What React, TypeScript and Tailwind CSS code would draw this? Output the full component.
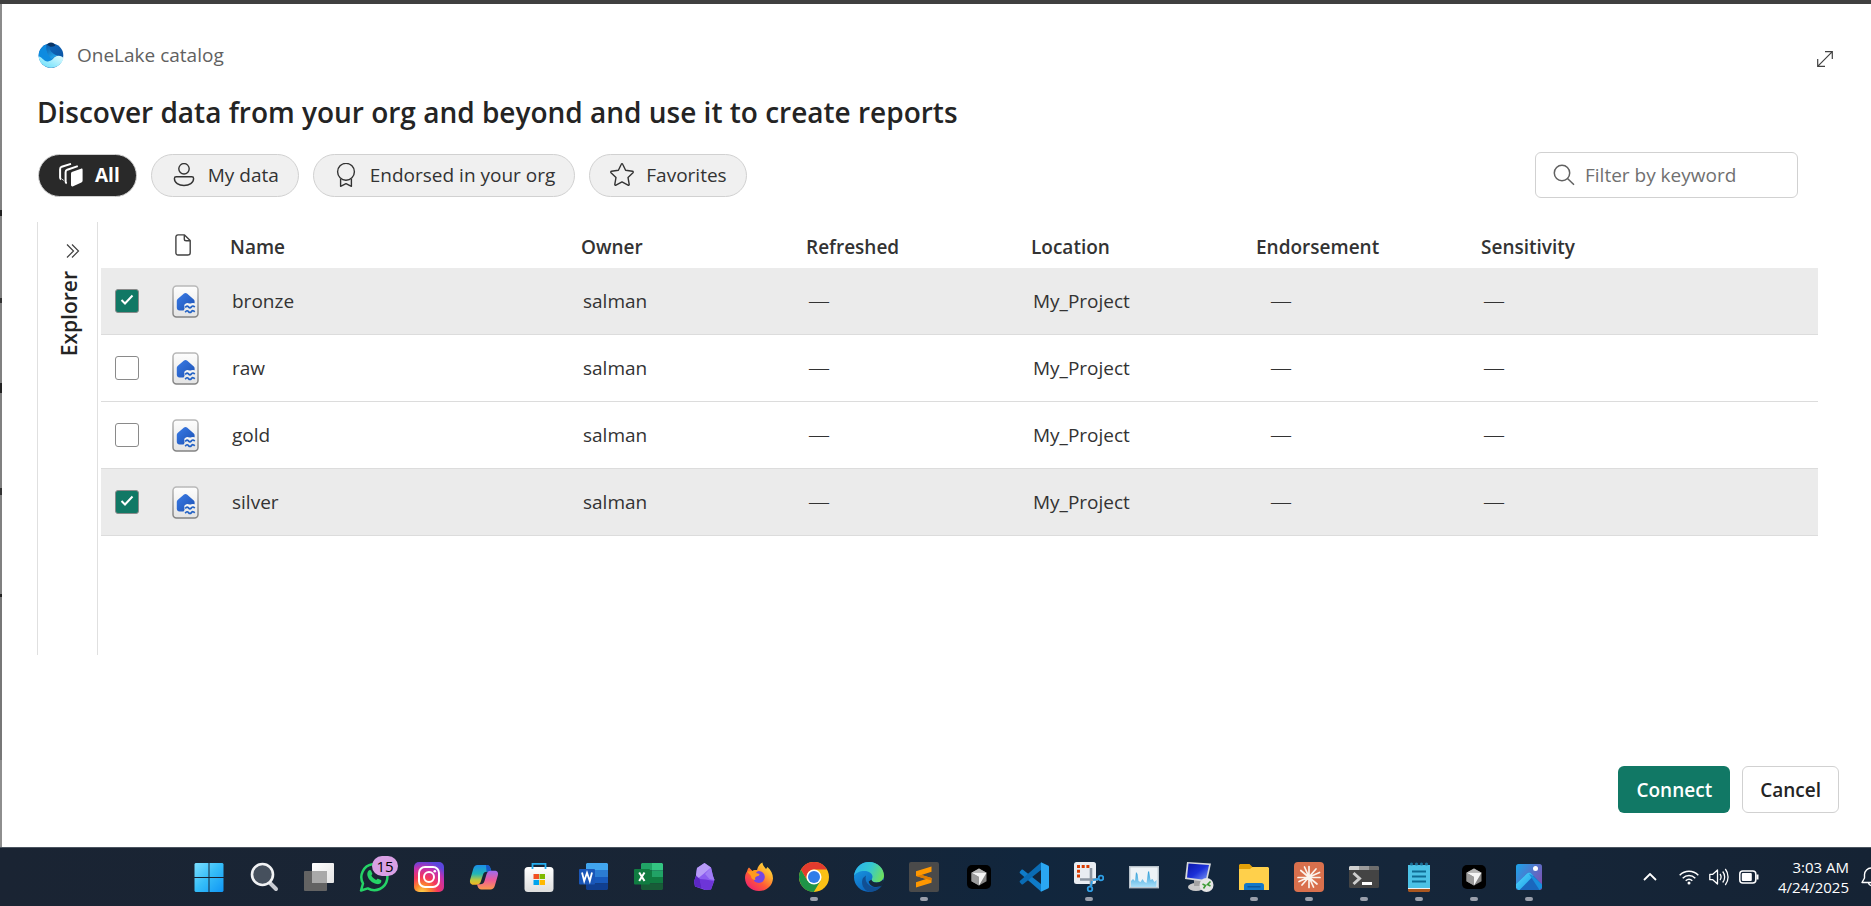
import { useId, useState, type ReactNode } from "react";

type IconProps = { className?: string };

function OneLakeLogo() {
  const id = useId();
  return (
    <svg viewBox="0 0 26 26" className="size-[26px]" aria-hidden="true">
      <defs>
        <linearGradient id={id + "a"} x1="0" y1="0" x2="1" y2="1">
          <stop offset="0" stopColor="#0f6fc6" />
          <stop offset="1" stopColor="#0b4f9c" />
        </linearGradient>
        <linearGradient id={id + "b"} x1="0" y1="0" x2=".6" y2="1">
          <stop offset="0" stopColor="#0b5cab" />
          <stop offset="1" stopColor="#22a7ee" />
        </linearGradient>
        <linearGradient id={id + "c"} x1="1" y1="0" x2="0" y2="1">
          <stop offset="0" stopColor="#e3fdff" />
          <stop offset="1" stopColor="#5fdcfb" />
        </linearGradient>
      </defs>
      <circle cx="13" cy="13.500" r="12.300" fill={"url(#" + id + "a)"} />
      <path d="M8.500 3.800c.6-2 2.300-3.400 4.500-3.400s3.900 1.400 4.300 3.400c-2.500 1.200-6.300 1.200-8.800 0z" fill="#0a3566" />
      <path d="M8.500 2.500C2.500 5 .2 10.500.800 15c2.700 1 5 5 9.200 4.800 2 0 3.500-1.600 4.500-3.300C9.500 13 7.800 7 8.500 2.500z" fill="#0d8be0" />
      <path d="M9 2.700c-1.200 6 .4 10.500 5 14.400 1.500-1.500 3-3 5.800-3.300C14 11.500 11 8 11.500 3.900c-1-.1-1.800-.5-2.500-1.200z" fill={"url(#" + id + "b)"} />
      <path d="M.7 14.200c3 .6 4.800 5 9 5.200 5 .2 5.500-5.400 10.800-5.600 2.400 0 4.300 1 5 2.400-1.500 5.800-6.500 9.500-12.500 9.500C6.500 25.700.8 20.500.7 14.200z" fill={"url(#" + id + "c)"} />
    </svg>
  );
}

function ExpandIcon() {
  return (
    <svg viewBox="0 0 16 16" className="size-4" fill="none" stroke="#424242" strokeWidth="1.200" aria-hidden="true">
      <path d="M8 .7h7.300V8M8 15.300H.7V8M15.300.7.7 15.300" />
    </svg>
  );
}

function StackIcon({ className }: IconProps) {
  return (
    <svg viewBox="0 0 24 24" className={className} aria-hidden="true">
      <path d="M12.800 9 22 5.700c1-.3 1.600.1 1.600 1.100v11c0 .8-.4 1.400-1.200 1.700l-8.200 3.700c-1.200.5-2.200 0-2.200-1.200V10.800c0-.9.200-1.500.8-1.800z" fill="#fff" />
      <path d="M7.800 20.200c-.9-.3-1.200-.9-1.200-1.800V9.200c0-1.200.5-2 1.700-2.500l10.500-3.600" fill="none" stroke="#fff" strokeWidth="2" />
      <path d="M2.300 16.200c-.9-.3-1.200-.9-1.200-1.800V6.200C1.100 5 1.600 4.200 2.800 3.700L12 .9" fill="none" stroke="#fff" strokeWidth="2" />
      <path d="M4.500 17.500c-.7-.3-.9-.8-.9-1.500" fill="none" stroke="#fff" strokeWidth="1" />
    </svg>
  );
}

function PersonIcon({ className }: IconProps) {
  return (
    <svg viewBox="0 0 24 24" className={className} fill="none" stroke="currentColor" strokeWidth="1.400" aria-hidden="true">
      <circle cx="12" cy="5.800" r="5.200" />
      <path d="M4.200 13.800h15.600c1 0 1.800.7 1.800 1.700 0 4.300-4.300 7-9.600 7s-9.600-2.700-9.600-7c0-1 .8-1.700 1.800-1.700z" />
    </svg>
  );
}

function RibbonIcon({ className }: IconProps) {
  return (
    <svg viewBox="0 0 24 24" className={className} fill="none" stroke="currentColor" strokeWidth="1.400" strokeLinejoin="round" aria-hidden="true">
      <circle cx="12" cy="8.800" r="8.400" />
      <path d="M6.600 16v7.300L12 20.600l5.400 2.700V16" />
    </svg>
  );
}

function StarIcon({ className }: IconProps) {
  return (
    <svg viewBox="0 0 24 24" className={className} fill="none" stroke="currentColor" strokeWidth="1.400" strokeLinejoin="round" aria-hidden="true">
      <path d="M11.300 1.300c.3-.7 1.100-.7 1.400 0l2.900 6 6.900 1c.8.1 1 .9.500 1.400l-5 4.700 1.200 6.900c.1.700-.6 1.200-1.200.9L12 18.900l-6 3.300c-.6.3-1.300-.2-1.200-.9L6 14.400 1 9.700c-.5-.5-.3-1.300.5-1.400l6.900-1z" />
    </svg>
  );
}

function SearchIcon() {
  return (
    <svg viewBox="0 0 22 22" className="size-[22px] shrink-0" fill="none" stroke="#616161" strokeWidth="1.500" aria-hidden="true">
      <circle cx="9" cy="9" r="7.700" />
      <path d="m14.500 14.500 6.500 6.300" />
    </svg>
  );
}

function DoubleChevronIcon() {
  return (
    <svg viewBox="0 0 14 16" className="h-4 w-3.5" fill="none" stroke="#424242" strokeWidth="1.200" aria-hidden="true">
      <path d="m1 1.500 6.500 6.500L1 14.500M6 1.500 12.500 8 6 14.500" />
    </svg>
  );
}

function PageIcon() {
  return (
    <svg viewBox="0 0 16 22" className="h-[22px] w-4" fill="none" stroke="#424242" strokeWidth="1.400" strokeLinejoin="round" aria-hidden="true">
      <path d="M3 .9h6.500l5.700 5.700V18.800c0 1.300-.9 2.200-2.200 2.200H3C1.700 21 .9 20.100.9 18.800V3.100C.9 1.800 1.700.9 3 .9zM9.300 1v4c0 1.200.6 1.800 1.800 1.800H15" />
    </svg>
  );
}

function LakehouseIcon() {
  const id = useId();
  return (
    <svg viewBox="0 0 27 33" className="block h-[33px] w-[27px]" aria-hidden="true">
      <defs>
        <linearGradient id={id + "p"} x1="0" y1="0" x2="0" y2="1">
          <stop offset="0" stopColor="#fdfdfd" />
          <stop offset="1" stopColor="#e4e4e4" />
        </linearGradient>
        <linearGradient id={id + "s"} x1="0" y1="0" x2="0" y2="1">
          <stop offset="0" stopColor="#b9b9b9" />
          <stop offset="1" stopColor="#838383" />
        </linearGradient>
        <linearGradient id={id + "h"} x1="0" y1="0" x2="1" y2="1">
          <stop offset="0" stopColor="#3a7be6" />
          <stop offset="1" stopColor="#1c51b4" />
        </linearGradient>
      </defs>
      <rect x="1" y="1" width="25" height="31" rx="3.500" fill={"url(#" + id + "p)"} stroke={"url(#" + id + "s)"} strokeWidth="1.500" />
      <path d="M12 8.600c.9-.8 2.100-.8 3 0l6.800 5.900c.5.500.8 1 .8 1.700v2.300h-5.200l-3 .8-2.200 2.200.4 2.300-1 1.700H7.500c-1.600 0-2.700-1.100-2.700-2.700v-6.600c0-1 .3-1.800 1.100-2.500z" fill={"url(#" + id + "h)"} />
      <path d="M13.500 21.500c1.400-1.800 2.300-1.800 3.300-.6s1.800 1.200 2.700 0 1.900-1.200 3.200.2" fill="none" stroke="#f4f4f4" strokeWidth="4" />
      <path d="M13.200 22.500c1.400-1.800 2.300-1.800 3.300-.6s1.900 1.200 2.900 0 2-1.200 3.300.2M13.200 27.200c1.400-1.800 2.300-1.800 3.300-.6s1.900 1.200 2.900 0 2-1.200 3.300.2" fill="none" stroke="#2160c4" strokeWidth="1.700" />
    </svg>
  );
}

/* ---------- taskbar icons, all drawn on a 30 x 30 grid ---------- */

function Tile({ children }: { children: ReactNode }) {
  return (
    <svg viewBox="0 0 30 30" className="size-[30px]" aria-hidden="true">
      {children}
    </svg>
  );
}

function WindowsIcon() {
  return (
    <Tile>
      <defs>
        <linearGradient id="win" x1="0" y1="0" x2="30" y2="30" gradientUnits="userSpaceOnUse">
          <stop offset="0" stopColor="#7fe0ff" />
          <stop offset=".5" stopColor="#35bdf8" />
          <stop offset="1" stopColor="#0f95f5" />
        </linearGradient>
      </defs>
      <path fill="url(#win)" d="M1.500 1h13v14H.5V2zM15.500 1h13l1 1v13h-14zM.5 16h14v14h-13l-1-1zM15.500 16h14v13l-1 1h-13z" />
    </Tile>
  );
}

function TaskSearchIcon() {
  return (
    <Tile>
      <path d="m20.500 20.500 6.500 6.500" stroke="#c8cbd2" strokeWidth="4" strokeLinecap="round" />
      <circle cx="13.500" cy="12.500" r="10.500" fill="#46505d" stroke="#f1f2f4" strokeWidth="2.600" />
    </Tile>
  );
}

function TaskViewIcon() {
  return (
    <Tile>
      <defs>
        <linearGradient id="tv" x1="0" y1="0" x2="1" y2="1">
          <stop offset="0" stopColor="#fff" />
          <stop offset="1" stopColor="#e3e3e3" />
        </linearGradient>
      </defs>
      <rect x="0" y="9" width="23" height="20" rx="1" fill="#636363" />
      <rect x="8" y="1" width="22" height="20" rx="1" fill="url(#tv)" />
      <path d="M8 9h15v12H8z" fill="#a9a9a9" />
    </Tile>
  );
}

function WhatsAppIcon() {
  return (
    <Tile>
      <path d="M2 28.500 4 21.500a13 13 0 1 1 4.800 4.900z" fill="none" stroke="#25d366" strokeWidth="2.500" strokeLinejoin="round" />
      <path d="M9.700 8.500c.5-.6 1.900-.7 2.300.1l1.300 3c.2.5-.1 1-.9 2 1 2 2.600 3.500 4.800 4.400 1-1.300 1.300-1.500 1.800-1.300l2.900 1.400c.7.300.5 1.500.1 2.300-.8 1.500-2.600 2-4.300 1.600-5-1.300-8.200-4.500-9.300-8.600-.4-1.800.1-3.800 1.300-4.900z" fill="#25d366" />
    </Tile>
  );
}

function InstagramIcon() {
  return (
    <Tile>
      <defs>
        <radialGradient id="ig" cx="8" cy="31" r="32" gradientUnits="userSpaceOnUse">
          <stop offset="0" stopColor="#fdd84f" />
          <stop offset=".25" stopColor="#fb8a2e" />
          <stop offset=".5" stopColor="#f5365c" />
          <stop offset=".78" stopColor="#c531ae" />
          <stop offset="1" stopColor="#5b46dd" />
        </radialGradient>
      </defs>
      <rect width="30" height="30" rx="5" fill="url(#ig)" />
      <g fill="none" stroke="#fff" strokeWidth="2">
        <rect x="5" y="5" width="20" height="20" rx="6" />
        <circle cx="15" cy="15" r="5" />
      </g>
      <circle cx="20.800" cy="9.200" r="1.300" fill="#fff" />
    </Tile>
  );
}

function CopilotIcon() {
  return (
    <Tile>
      <defs>
        <linearGradient id="cpA" x1="0" y1="0" x2="0" y2="1">
          <stop offset="0" stopColor="#1b8ee8" />
          <stop offset=".45" stopColor="#21b6b6" />
          <stop offset=".75" stopColor="#b9c840" />
          <stop offset="1" stopColor="#f6b420" />
        </linearGradient>
        <linearGradient id="cpB" x1="0" y1="0" x2="0" y2="1">
          <stop offset="0" stopColor="#9c6cf0" />
          <stop offset=".5" stopColor="#ee5a98" />
          <stop offset="1" stopColor="#fb9a4c" />
        </linearGradient>
      </defs>
      <path d="M8.500 3h9c2.300 0 3.300 1.200 4 3.500l1 3.300h-5c-2 0-2.800.8-3.400 2.800L12 19c-.8 2.600-2 3.800-4.500 3.800H4.500C1.500 22.800.4 20.300 1.200 17.500L4.200 7C5 4.300 6.300 3 8.500 3z" fill="url(#cpA)" />
      <path d="M17 3h1c2 0 3 1.200 3.500 3.500l1 3.300h-5z" fill="#1557c8" />
      <path d="M21.500 27.500h-9c-2.300 0-3.300-1.200-4-3.500l-.5-1.800h3.500c2 0 3.300-1 4-3.300l2-6.600c.8-2.500 2-3.600 4.300-3.600h3.700c3 0 4.100 2 3.300 4.800l-3 10.300c-.8 2.500-2.100 3.700-4.300 3.700z" fill="url(#cpB)" />
    </Tile>
  );
}

function StoreIcon() {
  return (
    <Tile>
      <defs>
        <linearGradient id="st" x1="0" y1="0" x2="0" y2="1">
          <stop offset="0" stopColor="#fff" />
          <stop offset="1" stopColor="#dedede" />
        </linearGradient>
      </defs>
      <rect x=".5" y="5" width="29" height="25" rx="3.500" fill="url(#st)" />
      <path d="M8.500 7V1.800h13V7" fill="none" stroke="#25aef0" strokeWidth="1.800" />
      <path d="M9.500 12H15v5H9.500z" fill="#f25022" />
      <path d="M15.500 12H21v5h-5.500z" fill="#7fba00" />
      <path d="M9.500 18H15v5H9.500z" fill="#00a4ef" />
      <path d="M15.500 18H21v5h-5.500z" fill="#ffb900" />
    </Tile>
  );
}

function WordIcon() {
  return (
    <Tile>
      <path d="M8 1h20l1 1v6H7V2z" fill="#41a5ee" />
      <path d="M7 8h22v7H7z" fill="#2b7cd3" />
      <path d="M7 15h22v6.500H7z" fill="#185abd" />
      <path d="M7 21.500h22V27l-1 1H8l-1-1z" fill="#103f91" />
      <rect x="0" y="7" width="16" height="15.500" rx="1" fill="#1a56b8" />
      <path d="m3 10.500 2.200 8.500L8 10.800l2.800 8.200 2.200-8.500" fill="none" stroke="#fff" strokeWidth="1.800" />
    </Tile>
  );
}

function ExcelIcon() {
  return (
    <Tile>
      <path d="M8 1h10v7.500H7V2z" fill="#21a366" />
      <path d="M18 1h10l1 1v6.500H18z" fill="#33c481" />
      <path d="M7 8.500h11V15H7z" fill="#107c41" />
      <path d="M18 8.500h11V15H18z" fill="#21a366" />
      <path d="M7 15h22v6.500H7z" fill="#107c41" />
      <path d="M7 21.500h22V27l-1 1H8l-1-1z" fill="#185c37" />
      <rect x="0" y="7" width="16" height="15.500" rx="1" fill="#107c41" />
      <path d="m5.200 10.500 5.300 8.500M10.500 10.500 5.200 19" stroke="#fff" strokeWidth="2" />
    </Tile>
  );
}

function ObsidianIcon() {
  return (
    <Tile>
      <path d="M15.500 1 22 5.500l2 8.500 1.500 4-3.500 9.500L16 28 6 24.500l-1-5 2-6L8 6z" fill="#8b5cf0" />
      <path d="M15.500 1 22 5.500l-7 6-5.500 4.500-2.500-3 1-7z" fill="#b79bf7" />
      <path d="m22 5.500 2 8.500 1.500 4-5-1-4.500-5z" fill="#a07cf5" />
      <path d="m7 14 4 3 2 9.500-7-2-1-5z" fill="#5b27c4" />
      <path d="m10.500 17 6 .5L25 19l-3 8.500L16 28l-3.500-2z" fill="#6d35d8" />
    </Tile>
  );
}

function FirefoxIcon() {
  return (
    <Tile>
      <defs>
        <linearGradient id="ff" x1="1" y1="0" x2=".2" y2="1">
          <stop offset="0" stopColor="#fff04a" />
          <stop offset=".35" stopColor="#ffb02e" />
          <stop offset=".65" stopColor="#ff5a36" />
          <stop offset="1" stopColor="#ee1f72" />
        </linearGradient>
      </defs>
      <path d="M5 5.500 8.500 9c1.500-1 3-1.200 4.500-1C14 4 16 1.500 18.500.5c0 2.500 1.500 4 3.500 6.500l1.500-2C27 8 29 12 29 16.500 28.500 24 22.500 29 15 29 7 29 1.200 23.500 1 16c0-3 .8-5 2-6.500.3-1.500 1-3 2-4z" fill="url(#ff)" />
      <circle cx="14.800" cy="15" r="6" fill="#7546e4" />
      <path d="M3 9.500 8.500 9c2-1.200 4.500-1.200 6 0-1.500.4-2 1-2.300 2l3.300 1c0 1.500-1 2-3 2.500-1.500.5-1.800 2-1 3.500-3 0-4.500-2-4.500-4z" fill="#ff9a1f" />
    </Tile>
  );
}

function ChromeIcon() {
  return (
    <Tile>
      <circle cx="15" cy="15" r="15" fill="#fbc116" />
      <path d="M15 15 8.500 18.700 2 7.500A15 15 0 0 0 14.800 30l6.700-11.300z" fill="#1e9447" />
      <path d="M2 7.500A15 15 0 0 1 28 7.500H15a7.500 7.500 0 0 0-6.500 11.200z" fill="#e33b2e" />
      <circle cx="15" cy="15" r="7.500" fill="#fff" />
      <circle cx="15" cy="15" r="6" fill="#2f7de9" />
    </Tile>
  );
}

function EdgeIcon() {
  return (
    <Tile>
      <defs>
        <linearGradient id="edA" x1="0" y1=".3" x2="1" y2=".6">
          <stop offset="0" stopColor="#2bb4ee" />
          <stop offset=".5" stopColor="#35c8d0" />
          <stop offset="1" stopColor="#6fe05c" />
        </linearGradient>
        <linearGradient id="edB" x1="0" y1="0" x2=".6" y2="1">
          <stop offset="0" stopColor="#1ca2ea" />
          <stop offset="1" stopColor="#0a5fb8" />
        </linearGradient>
      </defs>
      <circle cx="15" cy="15" r="15" fill="url(#edB)" />
      <path d="M12 13.500c-2 6 3 12 10 12 2 0 4-.6 5.800-1.700C25.500 27.500 20.500 30 15.500 30 9 28 6.500 21 9 16z" fill="#114f93" />
      <path d="M0 14C1 6 7 0 15 0c9 0 15 6.500 15 13.500 0 4-3 7-7.500 7-3.500 0-5-1.500-5-2.500s1-1.500 1-3.500c0-3-3.500-5.500-8-5.500C5.500 9 1.500 11 0 14z" fill="url(#edA)" />
      <path d="M17.500 17.500c0 1.500 1.500 3 5 3 3 0 5-1 6.500-3l1 1.200-1.800 4.600c-1.800 1.200-4 1.700-6 1.700-3.500 0-7-2-7.500-5.500z" fill="#16273a" />
    </Tile>
  );
}

function SublimeIcon() {
  return (
    <Tile>
      <rect width="30" height="30" rx="2" fill="#4a4a4a" />
      <path d="M22.500 4.500v5.200L12.500 13l10 3v4.800l-15.500 4.700v-5.200l10-3.300-10-3V9.300z" fill="#ff9800" />
      <path d="m12.500 13 10 3v2.500L7 14z" fill="#e07c00" />
    </Tile>
  );
}

function CursorIcon() {
  return (
    <Tile>
      <rect x="3" y="3" width="24" height="24" rx="5" fill="#000" />
      <path d="m15 6.500 7.500 4.200v8.600L15 23.500l-7.500-4.200v-8.600z" fill="#858585" />
      <path d="m15 6.500 7.500 4.200h-15z" fill="#b5b5b5" />
      <path d="M7.500 10.700h15L15 23.500V15z" fill="#f4f4f4" />
      <path d="M7.500 10.700 15 15v8.500l-7.500-4.200z" fill="#9a9a9a" />
    </Tile>
  );
}

function VSCodeIcon() {
  return (
    <Tile>
      <path d="M1 9.500 2.500 7.800c.5-.4 1-.4 1.500 0L22 22v7.500L1 11.200c-.5-.5-.5-1.200 0-1.700z" fill="#0f7cc9" />
      <path d="M1 20.500 2.500 22.200c.5.400 1 .4 1.500 0L22 8V.5L1 18.800c-.5.500-.5 1.200 0 1.700z" fill="#0a6cb5" />
      <path d="M22 .2 29 3.500c.6.300 1 .8 1 1.500v20c0 .7-.4 1.200-1 1.500L22 29.800c-.3-.2-.3-1 0-1.300V1.500z" fill="#2aa6f2" />
    </Tile>
  );
}

function SnippingIcon() {
  return (
    <Tile>
      <rect width="22" height="22" rx="2.500" fill="#e9edf2" />
      <path d="M3 4.500h13M4.500 7.700v9" fill="none" stroke="#d83b01" strokeWidth="3" strokeDasharray="3 1.700" />
      <path d="M17 6v18M6 17.500h18" stroke="#8d97a3" strokeWidth="2.600" />
      <g fill="none" stroke="#2e9fe6" strokeWidth="1.800">
        <circle cx="16" cy="27" r="2.300" />
        <circle cx="27" cy="16" r="2.300" />
        <path d="M17 24.500 18 19M24.500 17 19 18" />
      </g>
    </Tile>
  );
}

function MonitorChartIcon() {
  return (
    <Tile>
      <defs>
        <linearGradient id="pm" x1="0" y1="0" x2="0" y2="1">
          <stop offset="0" stopColor="#2b9bd6" />
          <stop offset="1" stopColor="#a8def8" />
        </linearGradient>
      </defs>
      <rect x=".7" y="4.700" width="28.600" height="21" fill="#eef3f7" stroke="#b8c2cb" strokeWidth="1.400" />
      <path d="M2 25v-6l2-2 2 2 1-9 1.500 2 1 7 2 1 2-3 2 3 2 1 1.500-11 1-1 1.500 9 2-1 2 3 2-2v7z" fill="url(#pm)" />
    </Tile>
  );
}

function RemoteDesktopIcon() {
  return (
    <Tile>
      <defs>
        <linearGradient id="rd" x1="0" y1="0" x2="1" y2="1">
          <stop offset="0" stopColor="#0a16a8" />
          <stop offset=".5" stopColor="#1b2fd8" />
          <stop offset="1" stopColor="#7d9bf5" />
        </linearGradient>
      </defs>
      <ellipse cx="12" cy="25" rx="8" ry="4" fill="#c9c9c9" />
      <path d="M10 18h7v6h-7z" fill="#a3a3a3" />
      <path d="M3 0 27 1.500 23 20 1 17z" fill="#d6d8dc" />
      <path d="M4.500 1.500 25 3l-3.200 15L3 15.500z" fill="url(#rd)" />
      <circle cx="22.500" cy="23" r="7" fill="#e6e6e6" />
      <path d="m18.500 22 3 1.500-2 3M26.500 19.500l-3 3 3 1.500" fill="none" stroke="#3c9b35" strokeWidth="1.600" />
    </Tile>
  );
}

function FolderIcon() {
  return (
    <Tile>
      <path d="M1 2h9.500l3 3H29v8H0V3z" fill="#e3a008" />
      <path d="M0 7h11l2.500-2H29l1 1v22H0z" fill="#ffd04b" />
      <path d="M5 28v-4.500C5 22 6 21 7.500 21h15c1.500 0 2.500 1 2.500 2.500V28z" fill="#1277c9" />
      <path d="M8.500 24.800h13" stroke="#0b4f93" strokeWidth="1.200" />
    </Tile>
  );
}

function ClaudeIcon() {
  return (
    <Tile>
      <rect width="30" height="30" rx="4" fill="#d9704d" />
      <path d="M15 4.500v21M4 15.500h22M6.800 8.500 23 22M22 7 8 23M10.500 5l9 20M25.500 10.500 5 19.500" stroke="#fbf3ec" strokeWidth="1.700" strokeLinecap="round" />
    </Tile>
  );
}

function TerminalIcon() {
  return (
    <Tile>
      <rect y="4" width="30" height="22" rx="1.500" fill="#444" />
      <path d="M1 4h9v4H0V5z" fill="#d0d0d0" />
      <path d="M10 4h10v4H10z" fill="#9b9b9b" />
      <path d="M20 4h9l1 1v3H20z" fill="#6d6d6d" />
      <path d="m4.500 11 6 5.500-6 5.500" fill="none" stroke="#cfcfcf" strokeWidth="3" />
      <path d="M13 21.500h10" stroke="#fff" strokeWidth="3" />
    </Tile>
  );
}

function NotepadIcon() {
  return (
    <Tile>
      <path d="M4 26h22v3l-1 1H5l-1-1z" fill="#a9561f" />
      <path d="M4 25h22v2H4z" fill="#f3f3f3" />
      <path d="M4 3h22v23H4z" fill="#4cc2e6" />
      <path d="M8 9.500h14M8 14.500h14M8 19.500h14" stroke="#0f6c94" strokeWidth="1.800" />
      <g fill="#1c6f95">
        <circle cx="7.500" cy="2" r="1.600" />
        <circle cx="12.500" cy="2" r="1.600" />
        <circle cx="17.500" cy="2" r="1.600" />
        <circle cx="22.500" cy="2" r="1.600" />
      </g>
    </Tile>
  );
}

function PhotosIcon() {
  return (
    <Tile>
      <defs>
        <linearGradient id="ph" x1="0" y1="0" x2="1" y2=".6">
          <stop offset="0" stopColor="#1aa4ea" />
          <stop offset="1" stopColor="#7a55b5" />
        </linearGradient>
        <linearGradient id="phm" x1="0" y1="0" x2="1" y2="1">
          <stop offset="0" stopColor="#58d7fb" />
          <stop offset="1" stopColor="#159de8" />
        </linearGradient>
      </defs>
      <rect x="2" y="2" width="26" height="26" rx="2.500" fill="url(#ph)" />
      <path d="M2 22 13 11.500c1.500-1.200 3-1.200 4.200 0L28 22.500v3L25.500 28h-21L2 25.500z" fill="#1a67bd" />
      <path d="M2 22 13 11.500c1.500-1.200 3-1.200 4.200 0l2.300 2.300L5.500 28h-1L2 25.500z" fill="url(#phm)" />
      <path d="m15 12 3 1 10 9.500v3L25.500 28z" fill="#1a8fdd" />
      <circle cx="21.500" cy="6.500" r="2.500" fill="#fff" />
    </Tile>
  );
}

const apps: { name: string; icon: ReactNode; running?: boolean; badge?: number }[] = [
  { name: "Start", icon: <WindowsIcon /> },
  { name: "Search", icon: <TaskSearchIcon /> },
  { name: "Task View", icon: <TaskViewIcon /> },
  { name: "WhatsApp", icon: <WhatsAppIcon />, badge: 15 },
  { name: "Instagram", icon: <InstagramIcon /> },
  { name: "Copilot", icon: <CopilotIcon /> },
  { name: "Store", icon: <StoreIcon /> },
  { name: "Word", icon: <WordIcon /> },
  { name: "Excel", icon: <ExcelIcon /> },
  { name: "Obsidian", icon: <ObsidianIcon /> },
  { name: "Firefox", icon: <FirefoxIcon /> },
  { name: "Chrome", icon: <ChromeIcon />, running: true },
  { name: "Edge", icon: <EdgeIcon /> },
  { name: "Sublime Text", icon: <SublimeIcon />, running: true },
  { name: "Cursor", icon: <CursorIcon /> },
  { name: "Visual Studio Code", icon: <VSCodeIcon /> },
  { name: "Snipping Tool", icon: <SnippingIcon />, running: true },
  { name: "Performance Monitor", icon: <MonitorChartIcon /> },
  { name: "Remote Desktop", icon: <RemoteDesktopIcon /> },
  { name: "File Explorer", icon: <FolderIcon />, running: true },
  { name: "Claude", icon: <ClaudeIcon />, running: true },
  { name: "Terminal", icon: <TerminalIcon />, running: true },
  { name: "Notepad", icon: <NotepadIcon />, running: true },
  { name: "Cursor window", icon: <CursorIcon />, running: true },
  { name: "Photos", icon: <PhotosIcon />, running: true },
];

function Taskbar() {
  return (
    <footer className="flex h-[59px] shrink-0 items-stretch overflow-hidden border-t border-[#4b5560] bg-[linear-gradient(90deg,#1a2433_0%,#182536_40%,#11263d_55%,#15263a_75%,#152334_100%)]">
      <nav aria-label="Taskbar" className="flex shrink-0 pl-[181px]">
        {apps.map((app) => (
          <button key={app.name} type="button" aria-label={app.name} className="relative flex w-[55px] flex-col items-center pt-[14px]">
            {app.icon}
            {app.running && <span className="mt-[5px] h-1 w-2 rounded-full bg-[#9a9fab]" />}
            {app.badge && (
              <span className="absolute top-2 right-[3px] flex h-5 w-[26px] items-center justify-center rounded-full bg-[#d9a0e4] text-[15px] leading-5 text-black">
                {app.badge}
              </span>
            )}
          </button>
        ))}
      </nav>
      <div className="-mr-3 ml-auto flex shrink-0 items-center text-white">
        <svg viewBox="0 0 14 8" className="mr-[22px] h-2 w-3.5" fill="none" stroke="currentColor" strokeWidth="1.800" aria-label="Show hidden icons">
          <path d="m1 7 6-6 6 6" />
        </svg>
        <svg viewBox="0 0 20 16" className="mr-2.5 h-4 w-5" fill="none" stroke="currentColor" strokeWidth="1.500" aria-label="Wi-Fi">
          <path d="M.7 6.200c5.300-5.300 13.300-5.300 18.600 0M3.700 9.200c3.700-3.600 8.900-3.600 12.600 0M6.700 11.800c2-1.900 4.600-1.900 6.600 0" />
          <circle cx="10" cy="14" r="1.500" fill="currentColor" stroke="none" />
        </svg>
        <svg viewBox="0 0 20 18" className="mr-2.5 h-[18px] w-5" fill="none" stroke="currentColor" strokeWidth="1.300" strokeLinejoin="round" aria-label="Volume">
          <path d="M.8 6.300h3L8.500 2v14l-4.700-4.300h-3zM11 6c1.300 1.800 1.300 4.200 0 6M13.700 3.500c2.600 3.200 2.600 7.800 0 11M16.300 1c3.700 4.700 3.700 11.300 0 16" />
        </svg>
        <svg viewBox="0 0 20 14" className="mr-[19px] h-3.5 w-5" fill="none" stroke="currentColor" strokeWidth="1.500" aria-label="Battery">
          <rect x=".8" y="1" width="16" height="12" rx="3" />
          <rect x="2.800" y="3" width="10" height="8" rx="1" fill="currentColor" stroke="none" />
          <path d="M18.500 4.500v5" strokeWidth="2" />
        </svg>
        <div className="mr-3 text-right text-[15px] leading-5">
          <div>3:03 AM</div>
          <div>4/24/2025</div>
        </div>
        <svg viewBox="0 0 22 20" className="h-5 w-[22px]" fill="none" stroke="currentColor" strokeWidth="1.400" aria-label="Notifications">
          <path d="M1 15.500h18.500L17 11V7.500C17 4 14 1 10.300 1S3.500 4 3.500 7.500V11zM7.500 16c.5 1.700 1.500 2.500 2.800 2.500s2.300-.8 2.800-2.500" strokeLinejoin="round" />
        </svg>
      </div>
    </footer>
  );
}

/* ---------- dialog ---------- */

const filters = [
  { name: "All", Icon: StackIcon },
  { name: "My data", Icon: PersonIcon },
  { name: "Endorsed in your org", Icon: RibbonIcon },
  { name: "Favorites", Icon: StarIcon },
];

const items = ["bronze", "raw", "gold", "silver"];

function Dash() {
  return <span className="text-[22px] leading-6 font-light">—</span>;
}

export default function App() {
  const [active, setActive] = useState("All");
  const [selected, setSelected] = useState<string[]>(["bronze", "silver"]);
  const [keyword, setKeyword] = useState("");

  const toggle = (name: string) =>
    setSelected((s) => (s.includes(name) ? s.filter((n) => n !== name) : [...s, name]));

  return (
    <div className="flex min-h-screen flex-col bg-white font-['Open_Sans','Noto_Sans',sans-serif] text-[19px] leading-6 text-[#333]">
      <div className="flex flex-1 border-t-4 border-[#404040]">
        {/* edge of the window behind the dialog */}
        <div
          aria-hidden="true"
          className="w-0.5 shrink-0 bg-[linear-gradient(180deg,#8c8c8c_0,#808080_206px,#222_206px,#222_212px,#808080_212px,#808080_294px,#333_294px,#333_299px,#808080_299px,#808080_379px,#222_379px,#222_389px,#808080_389px,#808080_484px,#333_484px,#333_491px,#808080_491px,#808080_590px,#222_590px,#222_593px,#777_593px,#777_756px,#8e8e8e_756px)]"
        />
        <main className="flex min-w-0 flex-1 flex-col pt-[38px]">
          <header className="flex justify-between pr-[38px] pl-9">
            <div className="flex items-center gap-[13px] text-[#616161]">
              <OneLakeLogo />
              <span>OneLake catalog</span>
            </div>
            <button type="button" aria-label="Expand" className="pt-2">
              <ExpandIcon />
            </button>
          </header>

          <h1 className="mt-[26px] pl-[35px] text-[28px] leading-9 font-semibold text-[#242424]">
            Discover data from your org and beyond and use it to create reports
          </h1>

          <div className="mt-[22px] flex items-center justify-between pr-[73px] pl-9">
            <div className="flex gap-3.5" role="group" aria-label="Filters">
              {filters.map(({ name, Icon }) => (
                <button
                  key={name}
                  type="button"
                  aria-pressed={active === name}
                  onClick={() => setActive(name)}
                  className={
                    active === name
                      ? "flex h-[43px] items-center gap-3 rounded-full border border-[#d1d1d1] bg-[#292929] pr-4 pl-5 font-bold text-white"
                      : "flex h-[43px] items-center gap-3 rounded-full border border-[#d1d1d1] bg-[#f0f0f0] pr-[19px] pl-5 text-[#333]"
                  }
                >
                  <Icon className="size-6" />
                  {name}
                </button>
              ))}
            </div>
            <label className="flex h-[46px] w-[263px] items-center gap-2.5 rounded-md border border-[#d1d1d1] pl-[17px]">
              <SearchIcon />
              <input
                type="text"
                aria-label="Filter by keyword"
                placeholder="Filter by keyword"
                value={keyword}
                onChange={(e) => setKeyword(e.target.value)}
                className="w-full min-w-0 bg-transparent outline-none placeholder:text-[#707070]"
              />
            </label>
          </div>

          <div className="mt-6 flex min-h-[433px] gap-[3px] pr-[53px] pl-[35px]">
            <aside className="w-[61px] shrink-0 border-x border-[#e0e0e0]">
              <button type="button" className="flex w-full flex-col items-center gap-3 pt-[21px] pl-2.5">
                <DoubleChevronIcon />
                <span className="mr-2 rotate-180 text-[21px] leading-7 font-semibold text-[#242424] [writing-mode:vertical-rl]">
                  Explorer
                </span>
              </button>
            </aside>

            <table className="w-full table-fixed border-separate border-spacing-0 self-start text-left">
              <colgroup>
                <col className="w-[57px]" />
                <col className="w-[72px]" />
                <col className="w-[351px]" />
                <col className="w-[225px]" />
                <col className="w-[225px]" />
                <col className="w-[225px]" />
                <col className="w-[225px]" />
                <col />
              </colgroup>
              <thead>
                <tr className="h-[46px] [&>th]:pt-1 [&>th]:font-semibold">
                  <th scope="col" aria-label="Select" />
                  <th scope="col" aria-label="Type" className="pb-1 pl-[17px]">
                    <PageIcon />
                  </th>
                  <th scope="col">Name</th>
                  <th scope="col">Owner</th>
                  <th scope="col">Refreshed</th>
                  <th scope="col">Location</th>
                  <th scope="col">Endorsement</th>
                  <th scope="col">Sensitivity</th>
                </tr>
              </thead>
              <tbody>
                {items.map((name) => {
                  const checked = selected.includes(name);
                  return (
                    <tr
                      key={name}
                      className={
                        checked
                          ? "h-[67px] bg-[#ebebeb] [&>td]:border-b [&>td]:border-[#dcdcdc] [&>td]:pl-0.5"
                          : "h-[67px] [&>td]:border-b [&>td]:border-[#dcdcdc] [&>td]:pl-0.5"
                      }
                    >
                      <td>
                        <label className="relative ml-3 block size-6">
                          <input
                            type="checkbox"
                            aria-label={name}
                            checked={checked}
                            onChange={() => toggle(name)}
                            className="block size-6 appearance-none rounded-[3px] border border-[#8a8a8a] bg-white checked:bg-[#117865]"
                          />
                          {checked && (
                            <svg viewBox="0 0 24 24" className="pointer-events-none absolute inset-0 size-6" fill="none" stroke="#fff" strokeWidth="2" aria-hidden="true">
                              <path d="m6.500 11 3.500 3.500 7.500-8" />
                            </svg>
                          )}
                        </label>
                      </td>
                      <td>
                        <span className="block pl-3">
                          <LakehouseIcon />
                        </span>
                      </td>
                      <td>{name}</td>
                      <td>salman</td>
                      <td>
                        <Dash />
                      </td>
                      <td>My_Project</td>
                      <td>
                        <span className="pl-3">
                          <Dash />
                        </span>
                      </td>
                      <td>
                        <Dash />
                      </td>
                    </tr>
                  );
                })}
              </tbody>
            </table>
          </div>

          <div className="mt-auto flex justify-end gap-3 pr-8 pb-[34px] font-semibold">
            <button type="button" className="h-[47px] rounded-md bg-[#117865] px-[18px] text-white">
              Connect
            </button>
            <button type="button" className="h-[47px] rounded-md border border-[#d1d1d1] bg-white px-[17px] text-[#242424]">
              Cancel
            </button>
          </div>
        </main>
      </div>
      <Taskbar />
    </div>
  );
}
